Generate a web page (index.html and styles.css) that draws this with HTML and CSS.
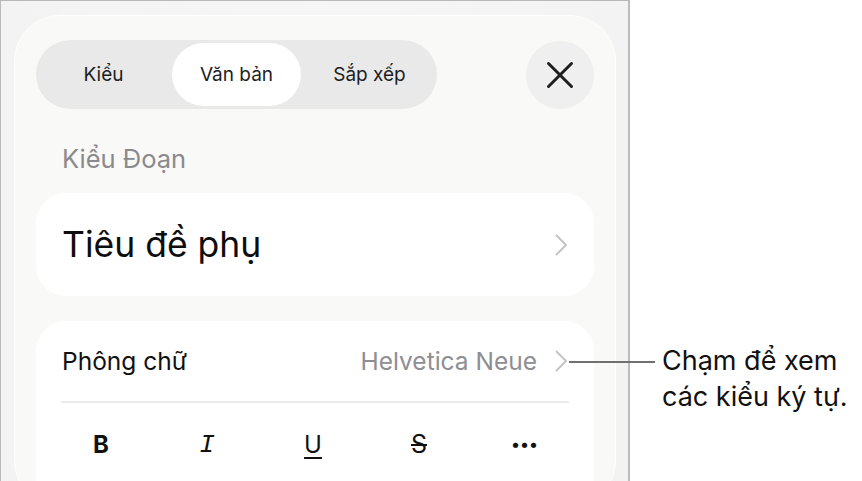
FILE: index.html
```html
<!DOCTYPE html>
<html lang="vi">
<head>
<meta charset="utf-8">
<title>Văn bản</title>
<link rel="stylesheet" href="styles.css">
</head>
<body>
<div class="page">
  <div class="frame">
    <div class="panel">
      <div class="header">
        <div class="segmented">
          <div class="seg">Kiểu</div>
          <div class="seg active">Văn bản</div>
          <div class="seg">Sắp xếp</div>
        </div>
        <div class="close">
          <svg width="28" height="28" viewBox="0 0 28 28"><path d="M2.5 2.5 L25.5 25.5 M25.5 2.5 L2.5 25.5" stroke="#1d1d1f" stroke-width="3" stroke-linecap="round" fill="none"/></svg>
        </div>
      </div>
      <div class="label">Kiểu Đoạn</div>
      <div class="card card-style">
        <span class="title">Tiêu đề phụ</span>
        <svg class="chev" width="13" height="22" viewBox="0 0 13 22"><path d="M1.5 1.5 L11 11 L1.5 20.5" stroke="#c4c4c7" stroke-width="2" stroke-linecap="round" stroke-linejoin="round" fill="none"/></svg>
      </div>
      <div class="card card-font">
        <div class="font-row">
          <span class="font-label">Phông chữ</span>
          <span class="font-value">Helvetica Neue
            <svg class="chev" width="13" height="22" viewBox="0 0 13 22"><path d="M1.5 1.5 L11 11 L1.5 20.5" stroke="#c4c4c7" stroke-width="2" stroke-linecap="round" stroke-linejoin="round" fill="none"/></svg>
          </span>
        </div>
        <div class="divider"></div>
        <div class="format-row">
          <span class="fmt fmt-b">B</span>
          <span class="fmt fmt-i">I</span>
          <span class="fmt fmt-u">U</span>
          <span class="fmt fmt-s">S</span>
          <span class="fmt fmt-more">•••</span>
        </div>
      </div>
    </div>
  </div>
  <div class="callout">Chạm để xem<br>các kiểu ký tự.</div>
  <div class="leader"></div>
</div>
</body>
</html>
```
FILE: styles.css
```css
* { box-sizing: border-box; }
html, body { margin: 0; padding: 0; }
body {
  width: 862px;
  height: 481px;
  overflow: hidden;
  background: #ffffff;
  font-family: Inter, "Noto Sans", sans-serif;
  color: #1d1d1f;
}
.page {
  position: relative;
  display: flex;
  width: 862px;
  height: 481px;
}
.frame {
  width: 630px;
  height: 481px;
  flex: none;
  border-left: 1px solid #b9b9b9;
  border-top: 1px solid #b9b9b9;
  border-right: 2px solid #bdbdbd;
  background: linear-gradient(90deg, #f3f3f3, #f6f6f6 50%, #f3f3f3);
  padding: 14px 0 0 13px;
  overflow: hidden;
}
.panel {
  width: 602px;
  height: 492px;
  background: #f9f9f8;
  border: 1px solid #ffffff;
  border-radius: 46px;
  padding: 24px 21px 0 21px;
}
.header {
  display: flex;
  justify-content: space-between;
  align-items: center;
}
.segmented {
  width: 401px;
  height: 69px;
  border-radius: 35px;
  background: #e9e9e9;
  padding: 3px;
  display: grid;
  grid-template-columns: repeat(3, 1fr);
  gap: 4px;
}
.seg {
  display: flex;
  align-items: center;
  justify-content: center;
  border-radius: 32px;
  font-size: 19px;
  color: #1d1d1f;
}
.seg.active {
  background: #ffffff;
}
.close {
  width: 68px;
  height: 68px;
  border-radius: 50%;
  background: #efefef;
  display: flex;
  align-items: center;
  justify-content: center;
}
.label {
  margin-top: 35px;
  padding-left: 26px;
  height: 30px;
  line-height: 30px;
  font-size: 25.5px;
  color: #8a8a8e;
}
.card {
  background: #ffffff;
  border-radius: 30px;
}
.card-style {
  margin-top: 19px;
  height: 103px;
  padding: 0 26px 0 26px;
  display: flex;
  align-items: center;
  justify-content: space-between;
}
.title {
  font-size: 35.5px;
  color: #0d0d0d;
}
.card-font {
  margin-top: 25px;
  height: 200px;
}
.font-row {
  height: 80px;
  padding: 0 26px;
  display: flex;
  align-items: center;
  justify-content: space-between;
}
.font-label {
  font-size: 24.5px;
  color: #111111;
}
.font-value {
  display: flex;
  align-items: center;
  gap: 18px;
  font-size: 24.5px;
  color: #8e8e93;
}
.divider {
  height: 2px;
  margin: 0 25px;
  background: #ebebeb;
}
.format-row {
  height: 83px;
  padding-left: 12px;
  display: grid;
  grid-template-columns: repeat(5, 106px);
  align-items: center;
  justify-items: center;
}
.fmt {
  font-size: 24px;
  color: #111111;
  line-height: 1;
}
.fmt-b { font-weight: 700; }
.fmt-i { font-family: "Liberation Mono", monospace; font-style: italic; font-size: 26px; }
.fmt-u { text-decoration: underline; text-decoration-thickness: 2px; text-underline-offset: 4px; font-weight: 400; }
.fmt-s { text-decoration: line-through; text-decoration-thickness: 2px; font-weight: 400; font-size: 25px; }
.fmt-more { font-size: 17px; letter-spacing: 1px; font-weight: 700; }
.callout {
  margin-left: 32px;
  padding-top: 343px;
  font-size: 27px;
  line-height: 36px;
  color: #111111;
  white-space: nowrap;
}
.leader {
  position: absolute;
  left: 569px;
  top: 361px;
  width: 86px;
  height: 2px;
  background: #707070;
}
```
